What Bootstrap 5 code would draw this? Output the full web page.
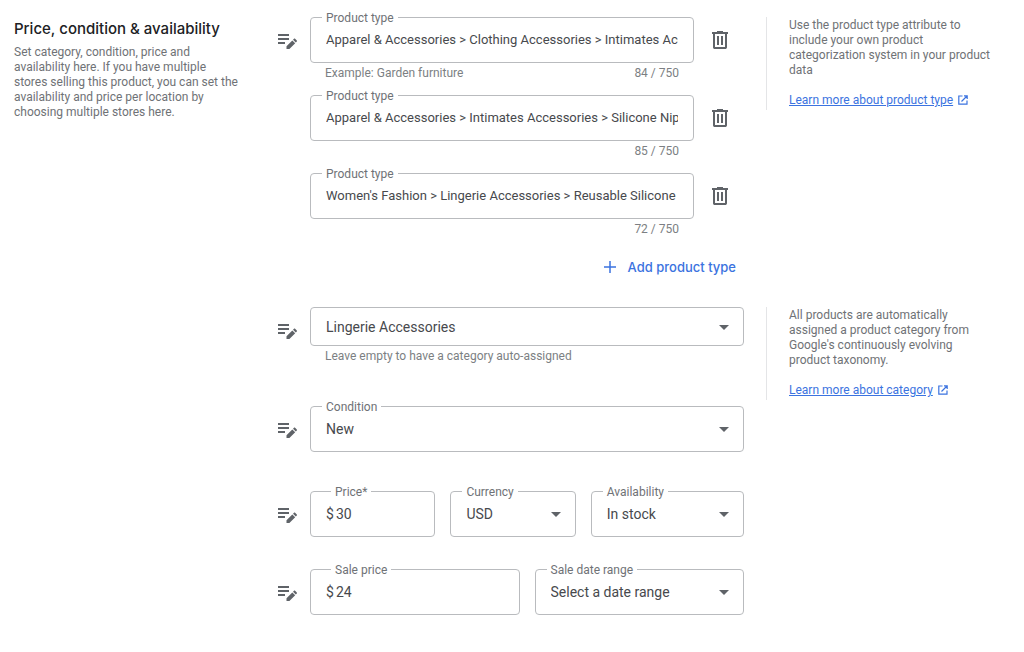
<!DOCTYPE html>
<html lang="en">
<head>
<meta charset="utf-8">
<meta name="viewport" content="width=device-width, initial-scale=1">
<title>Price, condition &amp; availability</title>
<link href="https://cdn.jsdelivr.net/npm/bootstrap@5.3.0/dist/css/bootstrap.min.css" rel="stylesheet">
<style>
  body { font-family: Roboto, "Liberation Sans", sans-serif; font-size: 12px; line-height: 15px; color: #6f7276; background: #fff; }
  .page-grid { display: grid; grid-template-columns: 264fr 732fr; padding: 17px 14px; }
  .section-grid { display: grid; grid-template-columns: 466fr 266fr; align-items: start; }
  .intro { padding-right: 32px; }
  .intro h1 { font-family: Inter, Roboto, sans-serif; font-size: 15px; line-height: 24px; font-weight: 500; color: #202124; white-space: nowrap; }
  .intro p { margin: 4px 0 0; }
  .with-icon { display: grid; grid-template-columns: 32px minmax(0, 1fr); align-items: start; }
  .rule-icon { margin-top: 14px; color: #5f6368; }
  .outlined { position: relative; display: flex; align-items: center; height: 46px; padding: 0 15px; border: 1px solid #b9bbbe; border-radius: 4px; }
  .outlined.compact { height: 39px; }
  .outlined .float-label { position: absolute; top: -7px; left: 11px; padding: 0 4px; background: #fff; white-space: nowrap; }
  .outlined .float-label.shifted { left: 20px; }
  .outlined .form-control, .outlined .form-select { font-size: 14px; line-height: 20px; color: #47494d; padding: 0; border: 0; border-radius: 0; background: none; box-shadow: none; min-width: 0; }
  .product-row .outlined .form-control { font-size: 13px; }
  .outlined:focus-within { border-color: #1a73e8; }
  .prefix { font-size: 14px; color: #47494d; margin-right: 2px; }
  .has-caret::after { content: ""; position: absolute; right: 14px; top: calc(50% - 2px); border: 5px solid transparent; border-top-color: #5f6368; border-bottom: 0; pointer-events: none; }
  .hint { display: flex; justify-content: space-between; padding: 3px 15px 0; min-height: 18px; color: #7c7f83; }
  .product-row { display: grid; grid-template-columns: minmax(0, 1fr) 50px; margin-bottom: 14px; }
  .trash { width: 24px; height: 24px; margin: 11px 0 0 14px; padding: 0; border: 0; line-height: 1; color: #5f6368; }
  .add-btn { font-family: Inter, Roboto, sans-serif; font-size: 13px; line-height: 20px; font-weight: 500; color: #3b73e0; padding: 0; border: 0; margin: 4px 8px 0 0; gap: 11px; }
  .category-section { margin-top: 30px; }
  .stack { display: grid; row-gap: 32px; }
  .details { margin-top: 6px; }
  .details .with-icon:first-child { margin-bottom: 7px; }
  .triple { display: grid; grid-template-columns: 9fr 9fr 11fr; gap: 15px; }
  .double { display: grid; grid-template-columns: 1fr 1fr; gap: 15px; }
  .help { margin-left: 22px; padding: 1px 18px 2px 22px; border-left: 1px solid #e4e5e7; }
  .help p { margin: 0 0 15px; }
  .help p:last-child { margin: 0; color: #3b73e0; }
  .help a { color: #3b73e0; }
  .help svg { display: inline-block; margin-left: 5px; vertical-align: -1px; }
</style>
</head>
<body>
<svg class="d-none" xmlns="http://www.w3.org/2000/svg">
  <symbol id="i-rule" viewBox="0 0 20 20">
    <path fill="currentColor" d="M0 3h11v2H0zM0 7h11v2H0zM0 11h7v2H0zM8.500 15.200l5.800-5.800 2.900 2.900L11.400 18H8.500zM15 8.700l1-1c.3-.3.8-.3 1.100 0l1.700 1.700c.3.3.3.8 0 1.100l-1 1z"/>
  </symbol>
  <symbol id="i-trash" viewBox="0 0 24 24">
    <path fill="currentColor" fill-rule="evenodd" d="M9 3h6v1h5v2h-1v13.200c0 1-.8 1.800-1.800 1.800H6.800C5.800 21 5 20.200 5 19.200V6H4V4h5zM7 6v13h10V6zM9 8h2v9H9zM13 8h2v9h-2z"/>
  </symbol>
  <symbol id="i-out" viewBox="0 0 10 10">
    <path fill="none" stroke="currentColor" stroke-width="1.200" d="M4.500 1H.8v8.200H9V5.500M6 .8h3.200V4M9 1L3.500 6.500"/>
  </symbol>
</svg>

<main class="page-grid">
  <header class="intro">
    <h1 class="mb-0">Price, condition &amp; availability</h1>
    <p>Set category, condition, price and availability here. If you have multiple<br>stores selling this product, you can set the availability and price per location by choosing multiple stores here.</p>
  </header>

  <form>
    <section class="section-grid">
      <div class="with-icon">
        <svg class="rule-icon" width="20" height="20" aria-hidden="true"><use href="#i-rule"/></svg>
        <div>
          <div class="product-row">
            <div>
              <div class="outlined">
                <label class="float-label" for="type1">Product type</label>
                <input class="form-control" id="type1" type="text" value="Apparel &amp; Accessories &gt; Clothing Accessories &gt; Intimates Accessories">
              </div>
              <div class="hint"><span>Example: Garden furniture</span><span>84 / 750</span></div>
            </div>
            <button class="btn trash" type="button" aria-label="Remove product type"><svg width="24" height="24"><use href="#i-trash"/></svg></button>
          </div>
          <div class="product-row">
            <div>
              <div class="outlined">
                <label class="float-label" for="type2">Product type</label>
                <input class="form-control" id="type2" type="text" value="Apparel &amp; Accessories &gt; Intimates Accessories &gt; Silicone Nipple Covers">
              </div>
              <div class="hint"><span></span><span>85 / 750</span></div>
            </div>
            <button class="btn trash" type="button" aria-label="Remove product type"><svg width="24" height="24"><use href="#i-trash"/></svg></button>
          </div>
          <div class="product-row mb-0">
            <div>
              <div class="outlined">
                <label class="float-label" for="type3">Product type</label>
                <input class="form-control" id="type3" type="text" value="Women's Fashion &gt; Lingerie Accessories &gt; Reusable Silicone Covers">
              </div>
              <div class="hint"><span></span><span>72 / 750</span></div>
            </div>
            <button class="btn trash" type="button" aria-label="Remove product type"><svg width="24" height="24"><use href="#i-trash"/></svg></button>
          </div>
          <div class="d-flex justify-content-end pt-3">
            <button class="btn add-btn d-flex align-items-center" type="button">
              <svg width="14" height="14" viewBox="0 0 14 14" aria-hidden="true"><path d="M7 1v12M1 7h12" stroke="currentColor" stroke-width="1.500"/></svg>
              Add product type
            </button>
          </div>
        </div>
      </div>
      <aside class="help">
        <p>Use the product type attribute to include your own product categorization system in your product data</p>
        <p><a href="#">Learn more about product type</a><svg width="10" height="10" aria-hidden="true"><use href="#i-out"/></svg></p>
      </aside>
    </section>

    <section class="section-grid category-section">
      <div class="with-icon">
        <svg class="rule-icon" width="20" height="20" aria-hidden="true"><use href="#i-rule"/></svg>
        <div>
          <div class="outlined compact has-caret">
            <select class="form-select" id="category" aria-label="Category"><option>Lingerie Accessories</option></select>
          </div>
          <div class="hint"><span>Leave empty to have a category auto-assigned</span></div>
        </div>
      </div>
      <aside class="help">
        <p>All products are automatically assigned a product category from Google's continuously evolving product taxonomy.</p>
        <p><a href="#">Learn more about category</a><svg width="10" height="10" aria-hidden="true"><use href="#i-out"/></svg></p>
      </aside>
    </section>

    <section class="section-grid details">
      <div class="stack">
        <div class="with-icon">
          <svg class="rule-icon" width="20" height="20" aria-hidden="true"><use href="#i-rule"/></svg>
          <div class="outlined has-caret">
            <label class="float-label" for="condition">Condition</label>
            <select class="form-select" id="condition"><option>New</option></select>
          </div>
        </div>
        <div class="with-icon">
          <svg class="rule-icon" width="20" height="20" aria-hidden="true"><use href="#i-rule"/></svg>
          <div class="triple">
            <div class="outlined">
              <label class="float-label shifted" for="price">Price*</label>
              <span class="prefix">$</span><input class="form-control" id="price" type="text" value="30">
            </div>
            <div class="outlined has-caret">
              <label class="float-label" for="currency">Currency</label>
              <select class="form-select" id="currency"><option>USD</option></select>
            </div>
            <div class="outlined has-caret">
              <label class="float-label" for="stock">Availability</label>
              <select class="form-select" id="stock"><option>In stock</option></select>
            </div>
          </div>
        </div>
        <div class="with-icon">
          <svg class="rule-icon" width="20" height="20" aria-hidden="true"><use href="#i-rule"/></svg>
          <div class="double">
            <div class="outlined">
              <label class="float-label shifted" for="sale">Sale price</label>
              <span class="prefix">$</span><input class="form-control" id="sale" type="text" value="24">
            </div>
            <div class="outlined has-caret">
              <label class="float-label" for="dates">Sale date range</label>
              <select class="form-select" id="dates"><option>Select a date range</option></select>
            </div>
          </div>
        </div>
      </div>
    </section>
  </form>
</main>
<script src="https://cdn.jsdelivr.net/npm/bootstrap@5.3.0/dist/js/bootstrap.bundle.min.js"></script>
</body>
</html>
